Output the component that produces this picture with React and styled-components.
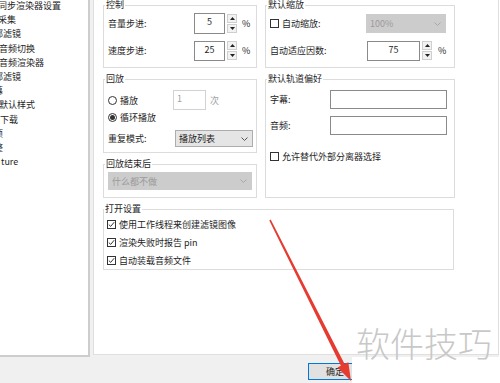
import React from "react";
import styled, { createGlobalStyle } from "styled-components";

const GlobalStyle = createGlobalStyle`
  *, *::before, *::after { box-sizing: border-box; }
  html, body { margin: 0; padding: 0; background: #fff; }
  body {
    font-family: "Noto Sans CJK SC", "Noto Sans", sans-serif;
    font-size: 9px;
    color: #1e1e1e;
  }
`;

const treeItems = [
  { text: "同步渲染器设置", shift: -2 },
  { text: "采集", shift: -2 },
  { text: "内部滤镜", shift: -15 },
  { text: "音频切换", shift: -1 },
  { text: "音频渲染器", shift: -1 },
  { text: "外部滤镜", shift: -15 },
  { text: "字幕", shift: -15 },
  { text: "默认样式", shift: -1 },
  { text: "下载", shift: 0 },
  { text: "杂项", shift: -15 },
  { text: "调整", shift: -15 },
  { text: "ture", shift: 1 },
];

const App = () => {
  return (
    <Page>
      <GlobalStyle />
      <Dialog>
        <Main>
          <Tree>
            {treeItems.map((item, i) => (
              <TreeItem key={i} $shift={item.shift}>
                {item.text}
              </TreeItem>
            ))}
          </Tree>
          <Panel>
            <Columns>
              <Column>
                <Group>
                  <Legend>控制</Legend>
                  <Row $h={21}>
                    <Label $w={86}>音量步进:</Label>
                    <SpinEdit value="5" w={31} h={21} />
                    <Unit>%</Unit>
                  </Row>
                  <Row $h={21} $mt={6}>
                    <Label $w={86}>速度步进:</Label>
                    <SpinEdit value="25" w={31} h={20} />
                    <Unit>%</Unit>
                  </Row>
                </Group>

                <Group $pad="6px 4px 5px">
                  <Legend>回放</Legend>
                  <Row $h={20}>
                    <Label $w={65}>
                      <Radio />
                      播放
                    </Label>
                    <EditBox $w={33} $h={20} $align="flex-start" $disabled>
                      1
                    </EditBox>
                    <Label $disabled $ml={4}>次</Label>
                  </Row>
                  <Row $h={14}>
                    <Label>
                      <Radio $checked />
                      循环播放
                    </Label>
                  </Row>
                  <Row $h={17} $mt={6}>
                    <Label $w={67}>重复模式:</Label>
                    <Combo $w={78} $h={17}>
                      播放列表
                      <Chevron />
                    </Combo>
                  </Row>
                </Group>

                <Group $pad="3px 4px 7px">
                  <Legend>回放结束后</Legend>
                  <Row $h={18}>
                    <Combo $h={18} $disabled>
                      什么都不做
                      <Chevron $disabled />
                    </Combo>
                  </Row>
                </Group>
              </Column>

              <Column>
                <Group>
                  <Legend>默认缩放</Legend>
                  <Row $h={21}>
                    <Label $w={96}>
                      <CheckBox />
                      自动缩放:
                    </Label>
                    <Combo $w={80} $h={19} $disabled>
                      100%
                      <Chevron $disabled />
                    </Combo>
                  </Row>
                  <Row $h={21} $mt={6}>
                    <Label $w={97}>自动适应因数:</Label>
                    <SpinEdit value="75" w={53} h={20} />
                    <Unit $ml={6}>%</Unit>
                  </Row>
                </Group>

                <Group $pad="6px 4px 5px" $grow>
                  <Legend>默认轨道偏好</Legend>
                  <Row $h={19}>
                    <Label $w={60}>字幕:</Label>
                    <EditBox $w={117} $h={19} />
                  </Row>
                  <Row $h={19} $mt={7}>
                    <Label $w={60}>音频:</Label>
                    <EditBox $w={117} $h={19} />
                  </Row>
                  <Row $h={12} $mt={15}>
                    <Label>
                      <CheckBox />
                      允许替代外部分离器选择
                    </Label>
                  </Row>
                </Group>
              </Column>
            </Columns>

            <Group $pad="3px 3px 2px" $mt={6}>
              <Legend>打开设置</Legend>
              <Row $h={14}>
                <Label>
                  <CheckBox $checked />
                  使用工作线程来创建滤镜图像
                </Label>
              </Row>
              <Row $h={14} $mt={4}>
                <Label>
                  <CheckBox $checked />
                  渲染失败时报告 pin
                </Label>
              </Row>
              <Row $h={14} $mt={4}>
                <Label>
                  <CheckBox $checked />
                  自动装载音频文件
                </Label>
              </Row>
            </Group>
          </Panel>
        </Main>
        <Footer>
          <OkButton>确定</OkButton>
        </Footer>
      </Dialog>

      <Watermark>软件技巧</Watermark>
      <ArrowLayer viewBox="0 0 500 383" width="500" height="383">
        <polygon
          points="269.3,220.4 270.7,219.6 344.6,364.0 348.3,362.2 351,381 337.5,367.6 340.9,365.8"
          fill="#e53b30"
        />
      </ArrowLayer>
    </Page>
  );
};

export default App;

const SpinEdit = ({ value, w, h }) => (
  <>
    <EditBox $w={w} $h={h}>
      {value}
    </EditBox>
    <Spin>
      <SpinBtn>
        <svg width="5" height="3" viewBox="0 0 5 3">
          <path d="M0 3 L2.5 0 L5 3 Z" fill="#222" />
        </svg>
      </SpinBtn>
      <SpinBtn>
        <svg width="5" height="3" viewBox="0 0 5 3">
          <path d="M0 0 L2.5 3 L5 0 Z" fill="#222" />
        </svg>
      </SpinBtn>
    </Spin>
  </>
);

const Chevron = ({ $disabled }) => (
  <svg width="7" height="4" viewBox="0 0 7 4">
    <path
      d="M0.5 0.5 L3.5 3.5 L6.5 0.5"
      fill="none"
      stroke={$disabled ? "#a8a8a8" : "#555"}
      strokeWidth="1"
    />
  </svg>
);

const Page = styled.div`
  position: relative;
  width: 500px;
  height: 383px;
  overflow: hidden;
`;

const Dialog = styled.div`
  display: flex;
  flex-direction: column;
  width: 499px;
`;

const Main = styled.div`
  display: flex;
  gap: 3px;
  height: 357px;
  background: #f0f0f0;
`;

const Tree = styled.ul`
  list-style: none;
  margin: 0;
  padding: 0;
  width: 90px;
  height: 357px;
  background: #fff;
  border-right: 2px solid #cdcdcd;
  border-bottom: 2px solid #cdcdcd;
  overflow: hidden;

  & > li:first-child {
    margin-top: -1px;
  }
`;

const TreeItem = styled.li`
  height: 14.2px;
  line-height: 14.2px;
  white-space: nowrap;
  margin-left: ${(p) => p.$shift}px;
`;

const Panel = styled.div`
  width: 406px;
  height: 355px;
  background: #fff;
  border: 1px solid #dfdfdf;
  border-top: none;
  padding-left: 9px;
`;

const Columns = styled.div`
  display: grid;
  grid-template-columns: 154px 190px;
  column-gap: 8px;
  width: 352px;
`;

const Column = styled.div`
  display: flex;
  flex-direction: column;
  gap: 6px;
`;

const Group = styled.fieldset`
  margin: ${(p) => p.$mt || 0}px 0 0;
  min-width: 0;
  width: ${(p) => (p.$mt ? "351px" : "auto")};
  padding: ${(p) => p.$pad || "3px 4px 6px"};
  border: 1px solid #dcdcdc;
  flex: ${(p) => (p.$grow ? 1 : "none")};
`;

const Legend = styled.legend`
  padding: 0 1px;
  margin-left: -3px;
  line-height: 10px;
  font-size: 9px;
  color: #1e1e1e;
`;

const Row = styled.div`
  display: flex;
  align-items: center;
  height: ${(p) => p.$h}px;
  margin-top: ${(p) => p.$mt || 0}px;
`;

const Label = styled.span`
  display: flex;
  align-items: center;
  flex: none;
  width: ${(p) => (p.$w ? `${p.$w}px` : "auto")};
  margin-left: ${(p) => p.$ml || 0}px;
  color: ${(p) => (p.$disabled ? "#a0a0a0" : "#1e1e1e")};
  white-space: nowrap;
`;

const Unit = styled.span`
  margin-left: ${(p) => p.$ml || 5}px;
`;

const EditBox = styled.div`
  flex: none;
  display: flex;
  align-items: flex-start;
  justify-content: ${(p) => p.$align || "center"};
  width: ${(p) => p.$w}px;
  height: ${(p) => p.$h}px;
  padding: 2px 3px 0;
  line-height: 12px;
  background: #fff;
  border: 1px solid ${(p) => (p.$disabled ? "#d2d2d2" : "#8a8a8a")};
  color: ${(p) => (p.$disabled ? "#a0a0a0" : "#1e1e1e")};
`;

const Spin = styled.div`
  display: flex;
  flex-direction: column;
  gap: 1px;
  margin-left: 2px;
`;

const SpinBtn = styled.div`
  display: flex;
  align-items: center;
  justify-content: center;
  width: 10px;
  height: 9px;
  background: #f2f2f2;
  border: 1px solid #cfcfcf;
`;

const Combo = styled.div`
  flex: none;
  display: flex;
  align-items: center;
  justify-content: space-between;
  width: ${(p) => (p.$w ? `${p.$w}px` : "100%")};
  height: ${(p) => p.$h}px;
  padding: 0 4px 0 3px;
  background: ${(p) => (p.$disabled ? "#cccccc" : "#e5e5e5")};
  border: 1px solid ${(p) => (p.$disabled ? "#cccccc" : "#adadad")};
  color: ${(p) => (p.$disabled ? "#9a9a9a" : "#1e1e1e")};
`;

const CheckBoxBox = styled.span`
  display: inline-flex;
  align-items: center;
  justify-content: center;
  flex: none;
  width: 9px;
  height: 9px;
  margin-right: 3px;
  background: #fff;
  border: 1px solid #333;
  border-radius: ${(p) => (p.$round ? "50%" : "0")};
`;

const CheckBox = ({ $checked }) => (
  <CheckBoxBox>
    {$checked && (
      <svg width="7" height="7" viewBox="0 0 7 7">
        <path d="M0.8 3.6 L2.7 5.4 L6.2 1.2" fill="none" stroke="#333" strokeWidth="1" />
      </svg>
    )}
  </CheckBoxBox>
);

const RadioDot = styled.span`
  width: 5px;
  height: 5px;
  border-radius: 50%;
  background: #333;
`;

const Radio = ({ $checked }) => (
  <CheckBoxBox $round>{$checked && <RadioDot />}</CheckBoxBox>
);

const Footer = styled.div`
  width: 352px;
  height: 26px;
  padding: 6px 0 0 308px;
  background: #f0f0f0;
  overflow: hidden;
  white-space: nowrap;
`;

const OkButton = styled.button`
  display: inline-block;
  width: 54px;
  height: 17px;
  padding: 0;
  font: inherit;
  color: #1e1e1e;
  background: #e1e1e1;
  border: 1px solid #0078d7;
`;

const Watermark = styled.div`
  position: absolute;
  left: 356px;
  top: 326px;
  font-size: 34px;
  font-weight: 300;
  line-height: 1;
  color: #c8c8c8;
  white-space: nowrap;
  pointer-events: none;
`;

const ArrowLayer = styled.svg`
  position: absolute;
  left: 0;
  top: 0;
  pointer-events: none;
`;
